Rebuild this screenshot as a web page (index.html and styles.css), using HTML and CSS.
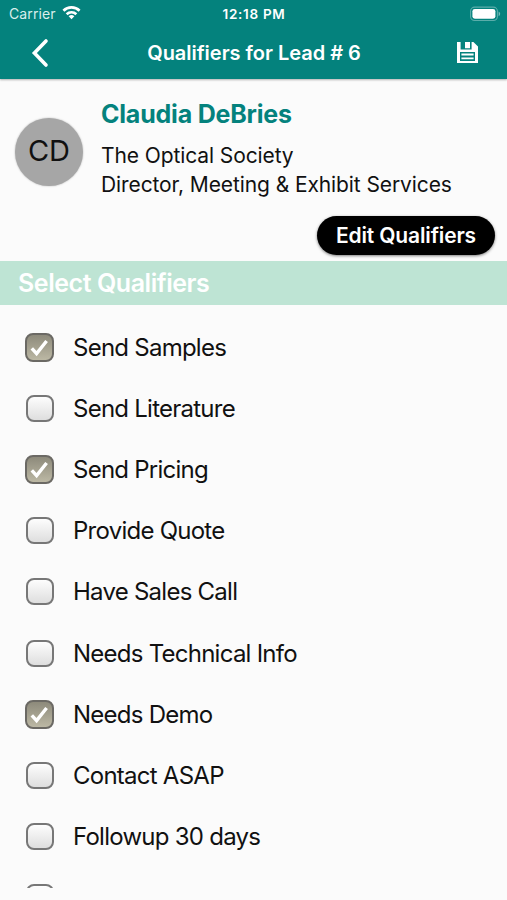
FILE: index.html
```html
<!DOCTYPE html>
<html lang="en">
<head>
    <meta charset="UTF-8">
    <meta name="viewport" content="width=device-width, initial-scale=1.0">
    <title>Qualifiers for Lead # 6</title>
    <link rel="stylesheet" href="styles.css">
</head>
<body>
    <header class="header">
        <div class="status-bar">
            <div class="carrier">
                <span class="carrier-name">Carrier</span>
                <svg class="wifi" width="19" height="15" viewBox="0 0 20 15" fill="none" stroke="#fff" stroke-width="2.8">
                    <path d="M1.5 5.7a12 12 0 0 1 17 0"/>
                    <path d="M4.9 9.3a7.3 7.3 0 0 1 10.2 0"/>
                    <path d="M10 14.6l-3-3.1a4.3 4.3 0 0 1 6 0z" fill="#fff" stroke="none"/>
                </svg>
            </div>
            <span class="time">12:18 PM</span>
            <svg class="battery" width="31" height="16" viewBox="0 0 31 16">
                <rect x="0.6" y="1.1" width="26.8" height="13.4" rx="4" fill="none" stroke="#fff" stroke-opacity="0.35" stroke-width="1.1"/>
                <rect x="2.4" y="2.9" width="23" height="9.8" rx="2.4" fill="#fff"/>
                <path d="M28.6 5.4a2.6 2.6 0 0 1 0 4.8z" fill="#fff" fill-opacity="0.45"/>
            </svg>
        </div>
        <div class="nav-bar">
            <a class="back" href="#">
                <svg width="18" height="30" viewBox="0 0 18 30" fill="none" stroke="#fff" stroke-width="3.6" stroke-linecap="round" stroke-linejoin="miter">
                    <path d="M15 3L3.4 15L15 27"/>
                </svg>
            </a>
            <h1 class="nav-title">Qualifiers for Lead # 6</h1>
            <a class="save" href="#">
                <svg width="21" height="21" viewBox="0 0 21 21">
                    <path fill="#fff" fill-rule="evenodd" d="M0 0H3.6V7.4H14.6V0H16.4L21 4.4V21H0zM3 10V19H18V10z"/>
                    <path fill="#fff" d="M8 0H13V6.2H8zM4.4 11.6H16.6V13.4H4.4zM4.4 15.4H16.6V17.2H4.4z"/>
                </svg>
            </a>
        </div>
    </header>

    <section class="lead">
        <div class="avatar">CD</div>
        <div class="lead-info">
            <h2 class="lead-name">Claudia DeBries</h2>
            <p class="lead-company">The Optical Society</p>
            <p class="lead-role">Director, Meeting &amp; Exhibit Services</p>
        </div>
    </section>
    <div class="actions">
        <button class="edit">Edit Qualifiers</button>
    </div>

    <h3 class="section-title">Select Qualifiers</h3>
    <div class="qualifiers">
        <label class="row"><input type="checkbox" class="check" checked>Send Samples</label>
        <label class="row"><input type="checkbox" class="check">Send Literature</label>
        <label class="row"><input type="checkbox" class="check" checked>Send Pricing</label>
        <label class="row"><input type="checkbox" class="check">Provide Quote</label>
        <label class="row"><input type="checkbox" class="check">Have Sales Call</label>
        <label class="row"><input type="checkbox" class="check">Needs Technical Info</label>
        <label class="row"><input type="checkbox" class="check" checked>Needs Demo</label>
        <label class="row"><input type="checkbox" class="check">Contact ASAP</label>
        <label class="row"><input type="checkbox" class="check">Followup 30 days</label>
        <label class="row"><input type="checkbox" class="check"></label>
    </div>
</body>
</html>
```

FILE: styles.css
```css
* {
    box-sizing: border-box;
}
body {
    margin: 0;
    height: 900px;
    overflow: hidden;
    background-color: #fbfbfb;
    color: #111;
    font-family: Inter, "Liberation Sans", sans-serif;
}
h1, h2, h3, p {
    margin: 0;
}
.header {
    height: 79px;
    background-color: #04827d;
    color: #fff;
    box-shadow: 0 1px 2px rgba(0,0,0,0.3);
}
.status-bar {
    display: grid;
    grid-template-columns: 1fr auto 1fr;
    align-items: center;
    height: 27px;
    padding: 0 6px 0 9px;
    font-size: 14px;
}
.carrier {
    display: flex;
    align-items: center;
    gap: 6px;
    color: #d9eeec;
}
.carrier-name {
    letter-spacing: 0.1px;
}
.wifi {
    margin-top: -2px;
}
.time {
    margin-left: -2px;
    font-weight: 600;
    font-size: 13.5px;
    letter-spacing: 0.7px;
}
.battery {
    justify-self: end;
}
.nav-bar {
    display: flex;
    align-items: center;
    justify-content: space-between;
    height: 51px;
    padding: 0 29px 0 31px;
}
.back, .save {
    display: flex;
}
.nav-title {
    margin-left: 2px;
    font-size: 20px;
    font-weight: 600;
    letter-spacing: -0.02px;
    white-space: nowrap;
}
.lead {
    display: flex;
    align-items: center;
    height: 137px;
    padding-left: 15px;
    gap: 18px;
}
.avatar {
    display: flex;
    align-items: center;
    justify-content: center;
    width: 68px;
    height: 68px;
    margin-top: 8px;
    padding-bottom: 2px;
    border-radius: 50%;
    background-color: #a6a6a6;
    box-shadow: 0 0 2px rgba(0,0,0,0.3);
    font-size: 29px;
}
.lead-info {
    margin-top: 2px;
    white-space: nowrap;
}
.lead-name {
    margin-bottom: 11px;
    color: #04827d;
    font-size: 25px;
    font-weight: 700;
    line-height: 32px;
    letter-spacing: -0.2px;
}
.lead-company, .lead-role {
    font-size: 21px;
    line-height: 29px;
    letter-spacing: -0.1px;
}
.actions {
    display: flex;
    justify-content: flex-end;
    height: 45px;
    padding-right: 12px;
}
.edit {
    width: 178px;
    height: 39px;
    padding: 0;
    border: none;
    border-radius: 20px;
    background-color: #000;
    color: #fff;
    box-shadow: 0 1px 3px rgba(0,0,0,0.5);
    font-family: inherit;
    font-size: 21px;
    font-weight: 600;
    letter-spacing: -0.15px;
}
.section-title {
    height: 44px;
    padding-left: 18px;
    background-color: #bee4d4;
    color: #fff;
    font-size: 25px;
    font-weight: 600;
    line-height: 44px;
    letter-spacing: -0.45px;
}
.qualifiers {
    height: 583px;
    padding-top: 12px;
    overflow: hidden;
}
.row {
    display: flex;
    align-items: center;
    gap: 19px;
    height: 61.1px;
    padding-left: 26px;
    font-size: 24px;
    letter-spacing: -0.75px;
}
.check {
    appearance: none;
    width: 28px;
    height: 27px;
    margin: 0;
    border: 2px solid #777;
    border-radius: 8px;
    background: linear-gradient(#fdfdfd, #dedede);
}
.check:checked {
    width: 29px;
    height: 29px;
    margin: 0 0 0 -1px;
    border-color: #6b6964;
    background: url("data:image/svg+xml,%3Csvg xmlns='http://www.w3.org/2000/svg' viewBox='0 0 25 25'%3E%3Cpath d='M4.8 13.3L9.6 18.6L19.6 6' fill='none' stroke='white' stroke-width='3.4'/%3E%3C/svg%3E") center / 25px 25px no-repeat, linear-gradient(#8d8a7b, #bcb8a4);
}
```
